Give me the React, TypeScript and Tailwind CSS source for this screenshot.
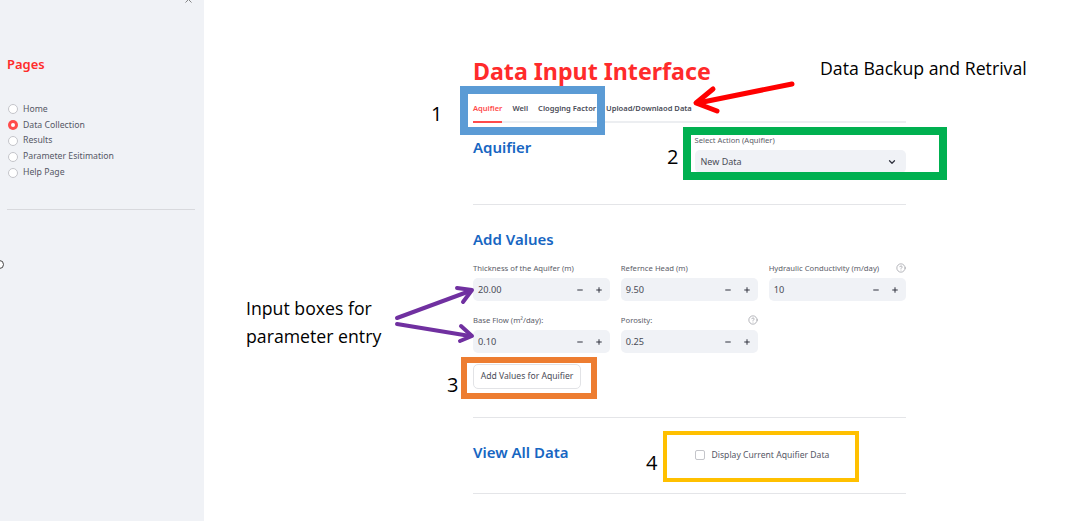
import { ChevronDown, Minus, Plus, X, CircleHelp } from 'lucide-react'

const pages = ['Home', 'Data Collection', 'Results', 'Parameter Esitimation', 'Help Page']

function NumberInput({ label, value, help }: { label: React.ReactNode; value: string; help?: boolean }) {
  return (
    <div className="flex flex-col">
      <div className="flex h-[15px] items-center justify-between pt-[2px] text-[7.7px] leading-none text-[#5b5d68]">
        <span>{label}</span>
        {help && <CircleHelp className="-mt-[2px] w-[10px] h-[10px] text-[#8a8c94]" strokeWidth={1.5} />}
      </div>
      <div className="mt-[3px] flex h-[23px] items-center rounded-[5px] bg-[#f0f2f6] pl-[5px] pr-[7px] text-[9.2px] text-[#4a4c57]">
        <span className="flex-1">{value}</span>
        <Minus className="w-[8px] h-[8px] text-[#31333f]" strokeWidth={3} />
        <Plus className="ml-[11px] w-[8px] h-[8px] text-[#31333f]" strokeWidth={3} />
      </div>
    </div>
  )
}

function Sidebar() {
  return (
    <aside className="relative w-[204px] shrink-0 bg-[#f0f2f6] pl-[7px] pr-[9px]">
      <X className="absolute right-[10px] top-[-6px] w-[11px] h-[11px] text-[#555]" strokeWidth={1.5} />
      <h2 className="pt-[55px] text-[13px] leading-[18px] font-semibold text-[#ff2b2b]">Pages</h2>
      <ul className="mt-[28.5px] flex flex-col">
        {pages.map((page, i) => (
          <li key={page} className="flex h-[15.8px] items-center gap-[5px] pl-[1px] text-[8.7px] text-[#555765]">
            {i === 1 ? (
              <span className="flex h-[10px] w-[10px] items-center justify-center rounded-full bg-[#ff4b4b]">
                <span className="h-[4px] w-[4px] rounded-full bg-white" />
              </span>
            ) : (
              <span className="h-[10px] w-[10px] rounded-full border border-[#c4c5ca] bg-white" />
            )}
            {page}
          </li>
        ))}
      </ul>
      <hr className="mt-[28.5px] border-[#d8d9dd]" />
      <span className="absolute left-[-5px] top-[260px] h-[9px] w-[9px] rounded-full border border-[#444] bg-white" />
    </aside>
  )
}

function Annotations() {
  return (
    <div className="pointer-events-none absolute inset-0 font-['Open_Sans',sans-serif] text-black">
      <div className="absolute left-[460px] top-[86px] h-[49px] w-[145px] border-[8px] border-[#5b9bd5]" />
      <div className="absolute left-[683px] top-[127px] h-[53px] w-[264px] border-[8px] border-[#00b050]" />
      <div className="absolute left-[461px] top-[357px] h-[42px] w-[136px] border-[6px] border-[#ed7d31]" />
      <div className="absolute left-[663px] top-[431px] h-[51px] w-[196px] border-[4px] border-[#ffc000]" />

      <span className="absolute left-[431px] top-[100px] text-[20px] leading-[28px]">1</span>
      <span className="absolute left-[667px] top-[143px] text-[20px] leading-[28px]">2</span>
      <span className="absolute left-[447px] top-[371px] text-[20px] leading-[28px]">3</span>
      <span className="absolute left-[646px] top-[449px] text-[20px] leading-[28px]">4</span>

      <span className="absolute left-[820px] top-[56px] text-[17.7px] leading-[24px] whitespace-nowrap">Data Backup and Retrival</span>
      <span className="absolute left-[246px] top-[294px] text-[17.7px] leading-[28px] whitespace-nowrap">
        Input boxes for
        <br />
        parameter entry
      </span>

      <svg className="absolute inset-0" width="1069" height="521" viewBox="0 0 1069 521" fill="none" strokeLinecap="round" strokeLinejoin="round">
        <g stroke="#ff0000" strokeWidth="5">
          <path d="M792 84 L698 103" />
          <path d="M713 89 L696 103 L717 111" />
        </g>
        <g stroke="#7030a0" strokeWidth="4">
          <path d="M397 318 L470 291" />
          <path d="M457 288 L472 290 L463 302" />
          <path d="M397 324 L470 336" />
          <path d="M461 326 L472 336 L460 341" />
        </g>
      </svg>
    </div>
  )
}

export default function App() {
  return (
    <div className="relative flex h-[521px] w-[1069px] overflow-hidden bg-white font-['Noto_Sans',sans-serif]">
      <Sidebar />
      <main className="flex-1 pl-[269px] pr-[163px]">
        <h1 className="pt-[56px] text-[23.2px] leading-[30px] font-bold text-[#ff2b2b]">Data Input Interface</h1>

        <div className="mt-[10px] flex h-[27px] gap-[10px] border-b-2 border-[#eceef1] text-[7.55px] font-semibold text-[#4a4c57]">
          <span className="-mb-[2px] flex h-[27px] items-center border-b-2 border-[#ff4b4b] text-[#ff4b4b]">Aquifier</span>
          <span className="flex h-[25px] items-center">Well</span>
          <span className="flex h-[25px] items-center whitespace-nowrap">Clogging Factor</span>
          <span className="flex h-[25px] items-center whitespace-nowrap">Upload/Downlaod Data</span>
        </div>

        <div className="grid grid-cols-2 gap-[10px]">
          <h3 className="pt-[13px] text-[15px] leading-[22px] font-semibold text-[#1766c2]">Aquifier</h3>
          <div className="pt-[11px]">
            <div className="text-[7.6px] leading-[13px] text-[#5b5d68]">Select Action (Aquifier)</div>
            <div className="mt-[3px] flex h-[23px] items-center justify-between rounded-[5px] bg-[#f0f2f6] pl-[6px] pr-[9px] text-[9px] text-[#4a4c57]">
              New Data
              <ChevronDown className="w-[10px] h-[10px] text-[#31333f]" strokeWidth={3} />
            </div>
          </div>
        </div>

        <hr className="mt-[31px] border-[#e4e5e8]" />

        <h3 className="pt-[23px] text-[15px] leading-[22px] font-semibold text-[#1766c2]">Add Values</h3>

        <div className="mt-[10px] grid grid-cols-3 gap-x-[10.5px] gap-y-[11px]">
          <NumberInput label="Thickness of the Aquifer (m)" value="20.00" />
          <NumberInput label="Refernce Head (m)" value="9.50" />
          <NumberInput label="Hydraulic Conductivity (m/day)" value="10" help />
          <NumberInput label={<>Base Flow (m²/day):</>} value="0.10" />
          <NumberInput label="Porosity:" value="0.25" help />
        </div>

        <button className="mt-[11px] h-[25px] w-[108px] rounded-[5px] border border-[#e2e3e6] bg-white text-[8.6px] text-[#4a4c57]">
          Add Values for Aquifier
        </button>

        <hr className="mt-[28px] border-[#e4e5e8]" />

        <div className="grid h-[75px] grid-cols-2 items-center gap-[10px]">
          <h3 className="pb-[8px] text-[15px] leading-[22px] font-semibold text-[#1766c2]">View All Data</h3>
          <label className="flex items-center gap-[7px] text-[8.6px] text-[#555765]">
            <span className="h-[10px] w-[10px] rounded-[2px] border border-[#c4c5ca] bg-white" />
            Display Current Aquifier Data
          </label>
        </div>

        <hr className="border-[#e4e5e8]" />
      </main>
      <Annotations />
    </div>
  )
}
